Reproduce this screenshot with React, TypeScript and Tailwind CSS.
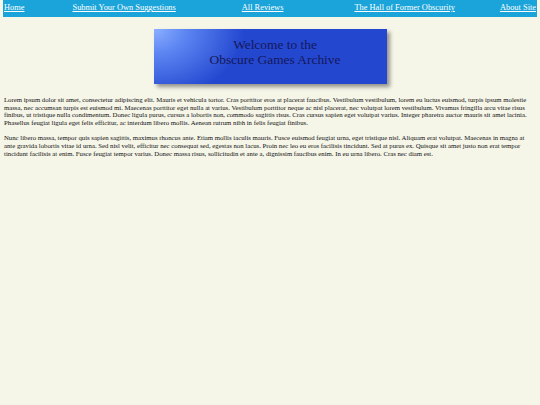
const LINKS = [
  { label: "Home", ml: "ml-0" },
  { label: "Submit Your Own Suggestions", ml: "ml-[48px]" },
  { label: "All Reviews", ml: "ml-[66px]" },
  { label: "The Hall of Former Obscurity", ml: "ml-[71px]" },
  { label: "About Site", ml: "ml-auto" },
];

const P1 =
  "Lorem ipsum dolor sit amet, consectetur adipiscing elit. Mauris et vehicula tortor. Cras porttitor eros at placerat faucibus. Vestibulum vestibulum, lorem eu luctus euismod, turpis ipsum molestie massa, nec accumsan turpis est euismod mi. Maecenas porttitor eget nulla at varius. Vestibulum porttitor neque ac nisl placerat, nec volutpat lorem vestibulum. Vivamus fringilla arcu vitae risus finibus, ut tristique nulla condimentum. Donec ligula purus, cursus a lobortis non, commodo sagittis risus. Cras cursus sapien eget volutpat varius. Integer pharetra auctor mauris sit amet lacinia. Phasellus feugiat ligula eget felis efficitur, ac interdum libero mollis. Aenean rutrum nibh in felis feugiat finibus.";

const P2 =
  "Nunc libero massa, tempor quis sapien sagittis, maximus rhoncus ante. Etiam mollis iaculis mauris. Fusce euismod feugiat urna, eget tristique nisl. Aliquam erat volutpat. Maecenas in magna at ante gravida lobortis vitae id urna. Sed nisl velit, efficitur nec consequat sed, egestas non lacus. Proin nec leo eu eros facilisis tincidunt. Sed at purus ex. Quisque sit amet justo non erat tempor tincidunt facilisis at enim. Fusce feugiat tempor varius. Donec massa risus, sollicitudin et ante a, dignissim faucibus enim. In eu urna libero. Cras nec diam est.";

export default function App() {
  return (
    <div className="min-h-[405px] bg-[#f5f5e8] px-[3px] font-['Liberation_Serif',serif] text-[#111]">
      <nav className="flex h-[17px] items-center bg-[#1aa4d9] px-[1px] text-[8.4px] leading-none">
        {LINKS.map((l) => (
          <a key={l.label} href="#" className={`${l.ml} text-white underline`}>
            {l.label}
          </a>
        ))}
      </nav>

      <div className="flex justify-center pt-[12px]">
        <div className="flex h-[55px] w-[233px] flex-col items-center pt-[8px] pl-[10px] bg-[radial-gradient(ellipse_90px_70px_at_0%_0%,#8cb0ff_0%,#5d86f2_35%,#2447d0_100%)] shadow-[3px_3px_4px_rgba(0,0,0,0.4)]">
          <span className="text-[13.4px] leading-[15px] text-[#14185a]">Welcome to the</span>
          <span className="text-[13.4px] leading-[15px] text-[#14185a]">Obscure Games Archive</span>
        </div>
      </div>

      <div className="mt-[12px] space-y-[8px] px-[1px] text-[6.75px] leading-[7.6px]">
        <p>{P1}</p>
        <p>{P2}</p>
      </div>
    </div>
  );
}
